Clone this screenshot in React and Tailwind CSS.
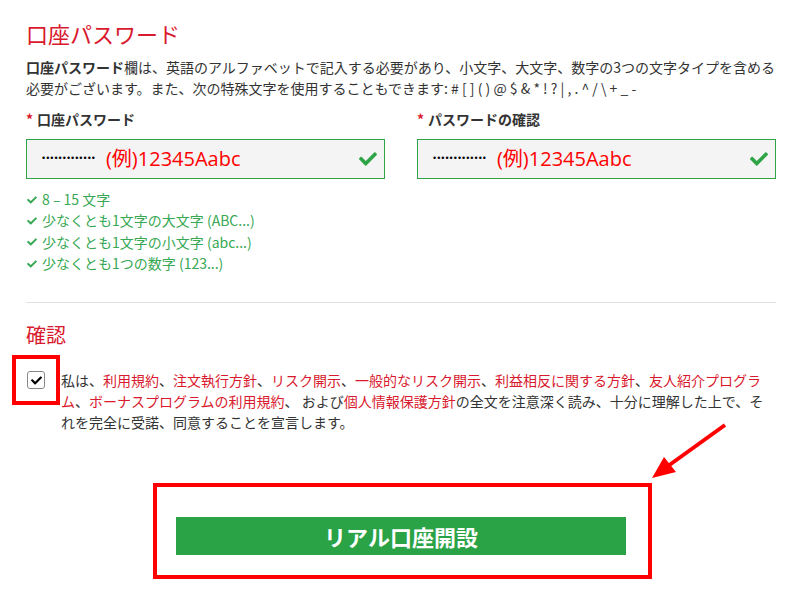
import React from 'react';
import { FaCheck } from 'react-icons/fa';

const red = 'text-[#d9192d]';

function PasswordField({ label }) {
  return (
    <div className="w-[359px]">
      <div className="text-[14px] leading-[20px] font-bold text-[#333]">
        <span className="text-[#d9192d] mr-1">*</span>
        {label}
      </div>
      <div className="mt-[10px] h-[40px] border border-[#2ea447] bg-[#f4f4f4] flex items-center pl-[15px] pr-[7px]">
        <span className="text-[9px] tracking-[1px] text-black font-['Liberation_Sans']">•••••••••••••</span>
        <span className="ml-[10px] text-[20px] text-[#ff0000] font-['Open_Sans','Noto_Sans_CJK_JP',sans-serif]">(例)12345Aabc</span>
        <FaCheck className="ml-auto text-[#2ea447] w-[18px] h-[18px]" />
      </div>
    </div>
  );
}

function Rule({ children }) {
  return (
    <div className="flex items-center text-[#37a853]">
      <FaCheck className="w-[10px] h-[10px] ml-[1px] mr-[5px]" />
      <span>{children}</span>
    </div>
  );
}

export default function App() {
  return (
    <div className="relative w-[811px] h-[591px] overflow-hidden bg-white font-['Noto_Sans_CJK_JP',sans-serif] text-[#333]">
      <div className="pl-[26px] w-[776px] pt-[19px]">
        <h1 className={`text-[22px] leading-[28px] ${red}`}>口座パスワード</h1>

        <p className="mt-[10px] text-[14px] leading-[21px] mr-[-8px]">
          <b>口座パスワード</b>欄は、英語のアルファベットで記入する必要があり、小文字、大文字、数字の3つの文字タイプを含める必要がございます。また、次の特殊文字を使用することもできます: # [ ] ( ) @ $ &amp; * ! ? | , . ^ / \ + _ -
        </p>

        <div className="mt-[10px] flex justify-between">
          <PasswordField label="口座パスワード" />
          <PasswordField label="パスワードの確認" />
        </div>

        <div className="mt-[10px] text-[14px] leading-[21.3px]">
          <Rule>8 – 15 文字</Rule>
          <Rule>少なくとも1文字の大文字 (ABC...)</Rule>
          <Rule>少なくとも1文字の小文字 (abc...)</Rule>
          <Rule>少なくとも1つの数字 (123...)</Rule>
        </div>

        <div className="mt-[28px] border-t border-[#e2e2e2]" />

        <h2 className={`mt-[18px] text-[20px] leading-[28px] ${red}`}>確認</h2>

        <div className="mt-[6px] flex items-start">
          <div className="-ml-[14px] w-[48px] h-[50px] border-[4px] border-[#ff0000] flex items-center justify-center shrink-0">
            <div className="w-[18px] h-[18px] border border-[#888] rounded-[3px] bg-white flex items-center justify-center">
              <FaCheck className="w-[11px] h-[11px] text-black" />
            </div>
          </div>
          <p className="ml-[1px] w-[710px] pt-[15px] text-[14px] leading-[20.7px]">
            私は、<span className={red}>利用規約</span>、<span className={red}>注文執行方針</span>、<span className={red}>リスク開示</span>、<span className={red}>一般的なリスク開示</span>、<span className={red}>利益相反に関する方針</span>、<span className={red}>友人紹介プログラム</span>、<span className={red}>ボーナスプログラムの利用規約</span>、 および<span className={red}>個人情報保護方針</span>の全文を注意深く読み、十分に理解した上で、それを完全に受諾、同意することを宣言します。
          </p>
        </div>

        <div className="mt-[51px] ml-[127px] w-[499px] h-[96px] border-[4px] border-[#ff0000] pl-[19px] pt-[30px]">
          <button className="w-[450px] h-[38px] bg-[#2aa347] text-white text-[22px] font-bold leading-[38px]">
            リアル口座開設
          </button>
        </div>
      </div>

      <svg className="absolute left-0 top-0 pointer-events-none" width="811" height="591" viewBox="0 0 811 591">
        <line x1="725" y1="425" x2="668" y2="466" stroke="#ff0000" strokeWidth="4" />
        <polygon points="652,478 664,457 676,472" fill="#ff0000" />
      </svg>
    </div>
  );
}
